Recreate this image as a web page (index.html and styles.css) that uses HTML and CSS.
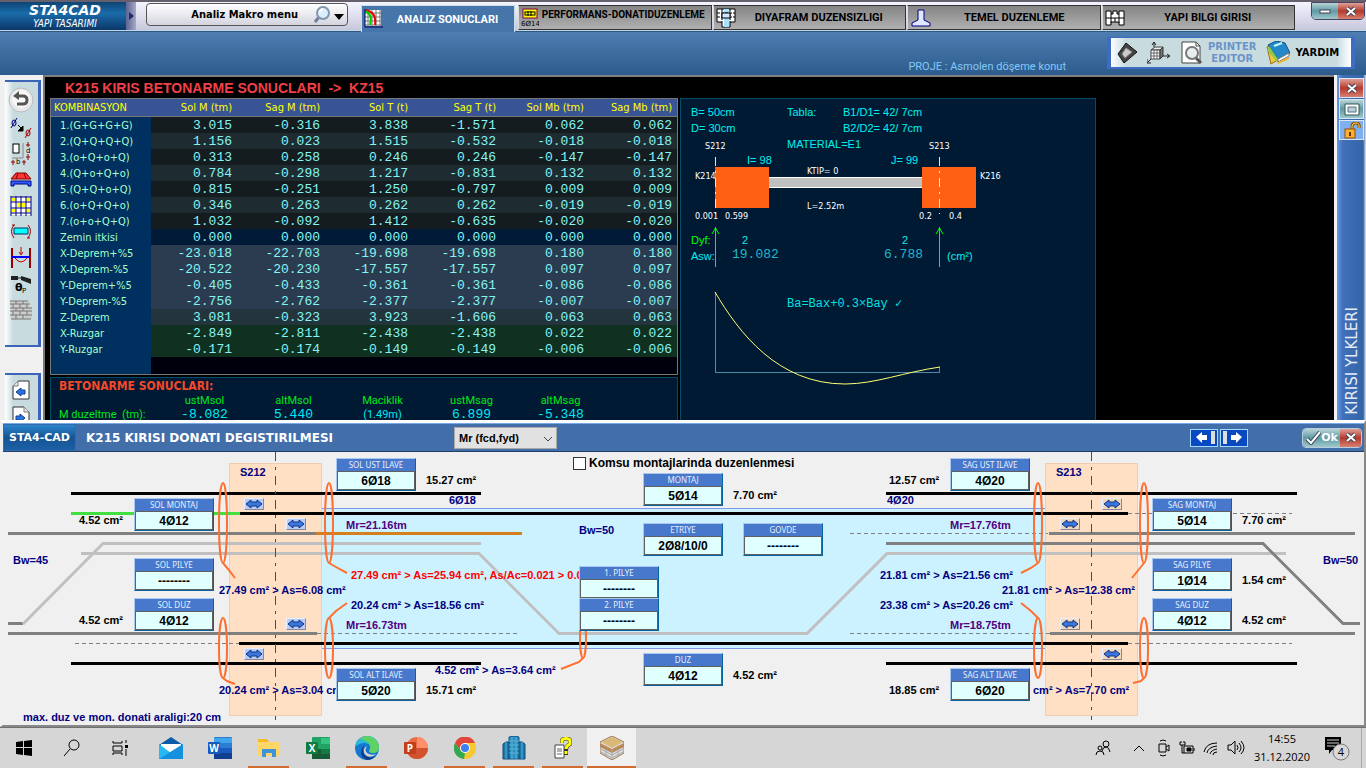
FILE: index.html
```html
<!DOCTYPE html>
<html lang="tr">
<head>
    <meta charset="UTF-8">
    <meta name="viewport" content="width=device-width, initial-scale=1.0">
    <title>STA4CAD - K215</title>
    <link rel="stylesheet" href="styles.css">
</head>
<body>

    <header class="topbar">
        <div class="logo"><b>STA4CAD</b><i>YAPI TASARIMI</i></div>
        <button class="logoArrow" aria-label="menu"><svg width="5" height="8"><path d="M0 0L5 4L0 8z" fill="#1c2c66"/></svg></button>
        <button class="macro">
            <span>Analiz Makro menu</span>
            <svg width="30" height="20" viewBox="0 0 30 20">
                <path d="M1 17L6 11" stroke="#6f7f95" stroke-width="3"/>
                <circle cx="9" cy="8" r="6" fill="#d8efff" stroke="#8296ad" stroke-width="2"/>
                <path d="M6 7a4 4 0 0 1 3-3" stroke="#fff" stroke-width="2" fill="none"/>
                <path d="M20 9h10l-5 6z" fill="#000"/>
            </svg>
        </button>
        <nav class="tabs">
            <button class="tab active">
                <svg width="20" height="20" viewBox="0 0 20 20"><path d="M1 1h16v16H1z" fill="#fff"/><path d="M1 4h16M1 8h16M1 12h16M1 16h16M4 1v16M8 1v16M12 1v16M16 1v16" stroke="#777"/><path d="M1 1Q13 3 11 16" stroke="#e00" stroke-width="2" fill="none"/><path d="M1 2Q9 5 6 16" stroke="#0c0" stroke-width="2" fill="none"/><path d="M1 0v18h18" stroke="#006" fill="none"/></svg>
                <span>ANALIZ SONUCLARI</span>
            </button>
            <button class="tab long">
                <svg width="18" height="19" viewBox="0 0 18 19"><rect x="2" y="1" width="14" height="9" fill="#ff0" stroke="#804"/><rect x="4" y="4" width="10" height="3" fill="#ff0" stroke="#000"/><path d="M7 3v5M10 3v5" stroke="#000"/><text x="0" y="18" class="tiny">6Ø14</text></svg>
                <span>PERFORMANS-DONATIDUZENLEME</span>
            </button>
            <button class="tab">
                <svg width="20" height="20" viewBox="0 0 20 20"><path d="M1 1h18v13h-5v5H6v-5H1z" fill="#fff" stroke="#000"/><path d="M8 1h5v18H8z" fill="#a8e0ff"/><path d="M1 5h18M1 9h18M6 1v13M14 1v13" stroke="#000" stroke-dasharray="3 1"/><rect x="6" y="5" width="8" height="5" fill="#d0e8ff" stroke="#000"/></svg>
                <span>DIYAFRAM DUZENSIZLIGI</span>
            </button>
            <button class="tab">
                <svg width="22" height="20" viewBox="0 0 22 20"><path d="M8 2h6v10l6 3v3H2v-3l6-3z" fill="#e0e8ff" stroke="#000080"/></svg>
                <span>TEMEL DUZENLEME</span>
            </button>
            <button class="tab">
                <svg width="20" height="18" viewBox="0 0 20 18"><path d="M1 2h5v3h2V2h4v3h2V2h5v14h-5v-3H6v3H1z" fill="#fff" stroke="#000"/><path d="M1 9h18M6 5v4M14 5v4M10 9v4M6 9v5M14 9v5" stroke="#000"/></svg>
                <span>YAPI BILGI GIRISI</span>
            </button>
        </nav>
        <div class="winBtns">
            <button class="teal" aria-label="Minimize"><svg width="12" height="5"><rect x="1" y="1" width="10" height="3" fill="#fff" stroke="#445"/></svg></button>
            <button class="red" aria-label="Close"><svg width="12" height="11" viewBox="0 0 12 11"><path d="M2 2l8 7M10 2l-8 7" stroke="#445" stroke-width="4"/><path d="M2 2l8 7M10 2l-8 7" stroke="#fff" stroke-width="2"/></svg></button>
        </div>
    </header>

    <div class="ribbon">
        <span class="project">PROJE : Asmolen döşeme konut</span>
        <div class="tools">
            <button aria-label="Plan"><svg width="20" height="20" viewBox="0 0 20 20"><path d="M9 0L20 9L7 20L1 11z" fill="#444" stroke="#111"/><path d="M9 5L15 9L8 15L5 11z" fill="#ccc" stroke="#888"/></svg></button>
            <button aria-label="3D"><svg width="24" height="22" viewBox="0 0 24 22"><path d="M4 8l4-3h8l-3 3z" fill="#eee" stroke="#444"/><path d="M4 8h9v9H4z" fill="#fff" stroke="#444"/><path d="M13 8l3-3v9l-3 3z" fill="#777" stroke="#333"/><path d="M4 11h9M4 14h9M7 8v9M10 8v9" stroke="#666"/><path d="M7 5V0M5 3l2-3l2 3M16 14h6M20 12l3 2l-3 2M4 17l-4 4M0 17v4h4" fill="none" stroke="#222"/></svg></button>
            <button class="printer">
                <svg width="22" height="23" viewBox="0 0 22 23"><path d="M1 1h14l4 4v17H1z" fill="#fff" stroke="#444"/><path d="M15 1v4h4" fill="none" stroke="#444"/><path d="M14 16l6 6" stroke="#555" stroke-width="3"/><circle cx="11" cy="12" r="6" fill="#e8eef0" stroke="#777" stroke-width="2"/></svg>
                <span>PRINTER<br>EDITOR</span>
            </button>
            <button class="help">
                <svg width="24" height="24" viewBox="0 0 24 24"><path d="M1 6l11-4l3 15l-10 6z" fill="#f4c63a" stroke="#9a7008"/><path d="M2 4l8-4l9 2l5 10l-12 6z" fill="#2688c8" stroke="#154c80"/><path d="M3 5l9 13v4L1 9z" fill="#8ccb4c"/><path d="M12 18l11-6v3l-11 6z" fill="#fff" stroke="#777"/><path d="M12 21l11-5v2l-11 5z" fill="#efb423"/><path d="M8 5l8-3" stroke="#bff" stroke-width="2"/></svg>
                <span>YARDIM</span>
            </button>
        </div>
    </div>

    <main>
        <aside class="side">
            <div class="toolbox">
                <button class="undo" aria-label="Undo"><svg width="26" height="26" viewBox="0 0 26 26"><circle cx="13" cy="13" r="12" fill="#e8e8e8" stroke="#bbb"/><circle cx="13" cy="12" r="9" fill="#f8f8f8"/><path d="M10 9h5q4 0 4 4t-4 4H9" fill="none" stroke="#555" stroke-width="3"/><path d="M11 4v9L5 9z" fill="#555"/></svg></button>
                <button aria-label="Donati"><svg width="22" height="22" viewBox="0 0 22 22"><ellipse cx="4" cy="6" rx="2" ry="3" fill="none" stroke="#000080"/><path d="M1 11L7 1" stroke="#000080"/><ellipse cx="18" cy="16" rx="2" ry="3" fill="none" stroke="#a00000"/><path d="M15 21l6-10" stroke="#a00000"/><path d="M8 8l5 5M13 9v5H8z" stroke="#000"/></svg></button>
                <button aria-label="Kesit"><svg width="22" height="24" viewBox="0 0 22 24"><rect x="3" y="2" width="6" height="9" fill="#fff" stroke="#000"/><path d="M13 1v15H2" stroke="#888" fill="none"/><path d="M18 0v5M16 3h4M18 12v6M16 15h4M1 20h4M3 18v5M12 20h4M14 18v5" stroke="#900"/><text x="16" y="11" class="tiny">d</text><text x="6" y="22" class="tiny">b</text></svg></button>
                <button aria-label="Tabla"><svg width="22" height="20" viewBox="0 0 22 20"><path d="M6 3h10l5 6H1z" fill="#f33" stroke="#800000"/><path d="M8 3L6 9M14 3l2 6" stroke="#800000"/><path d="M1 11h20v5h-3v-2H4v2H1z" fill="#3060ff" stroke="#000080"/></svg></button>
                <button aria-label="Tablo"><svg width="22" height="22" viewBox="0 0 22 22"><path d="M1 2h20v18H1z" fill="#fff"/><path d="M2 3h4v3H2zM16 3h4v3h-4zM7 8h8v4H7zM2 14h4v3H2zM16 14h4v3h-4z" fill="#ff0"/><path d="M1 2h20M1 7h20M1 13h20M1 18h20M1 1v20M6 1v20M11 1v20M16 1v20M21 1v20" stroke="#000080"/></svg></button>
                <button aria-label="Moment"><svg width="22" height="18" viewBox="0 0 22 18"><path d="M4 5h14v6H4z" fill="#0ff" stroke="#036"/><path d="M4 2Q-1 8 4 15M2 2h3M18 2q5 6 0 13M17 15h3" fill="none" stroke="#900" stroke-width="1"/></svg></button>
                <button aria-label="Kiris"><svg width="22" height="24" viewBox="0 0 22 24"><path d="M2 2v20M20 2v20" stroke="#900" stroke-width="2"/><path d="M2 11h18" stroke="#00f" stroke-width="2"/><path d="M5 12q6 8 12 0M11 1v7M9 6l2 3l2-3" fill="none" stroke="#c00"/></svg></button>
                <button aria-label="Mafsal"><svg width="22" height="22" viewBox="0 0 22 22"><path d="M1 3h7v4H1zM11 3l10 3v5l-10-4z" fill="#222"/><path d="M6 5h8" stroke="#222"/><text x="5" y="18" class="theta">θ</text><text x="12" y="20" class="tiny">P</text></svg></button>
                <button aria-label="Duvar"><svg width="22" height="20" viewBox="0 0 22 20"><path d="M0 1h19v6h3v12H1V6H0z" fill="#ccc"/><path d="M0 1h18M0 4h20M0 8h22M0 11h22M0 15h22M1 19h20M6 1v3M13 1v3M3 4v4M10 4v4M17 4v4M6 8v3M13 8v3M3 11v4M10 11v4M17 11v4M6 15v4M13 15v4" stroke="#777"/></svg></button>
            </div>
            <div class="toolbox pages">
                <button aria-label="Onceki"><svg width="18" height="20" viewBox="0 0 18 20"><path d="M6 1h11v18H1V6z" fill="#fff" stroke="#333"/><path d="M1 6h5V1" fill="#eee" stroke="#777"/><path d="M4 12l5-4v2h4v4H9v2z" fill="#2a74e0" stroke="#123f8c"/></svg></button>
                <button aria-label="Sonraki"><svg width="18" height="20" viewBox="0 0 18 20"><path d="M1 1h11l5 5v13H1z" fill="#fff" stroke="#333"/><path d="M12 1v5h5" fill="#eee" stroke="#777"/><path d="M13 12L8 8v2H4v4h4v2z" fill="#2a74e0" stroke="#123f8c"/></svg></button>
            </div>
        </aside>

        <section class="screen">
            <h1>K215 KIRIS BETONARME SONUCLARI &nbsp;-&gt;&nbsp; KZ15</h1>
            <div class="cols">
                <div class="left">
                    <table class="combo">
                        <thead>
                            <tr><th>KOMBINASYON</th><th>Sol M (tm)</th><th>Sag M (tm)</th><th>Sol T (t)</th><th>Sag T (t)</th><th>Sol Mb (tm)</th><th>Sag Mb (tm)</th></tr>
                        </thead>
                        <tbody>
                            <tr class="a"><th>1.(G+G+G+G)</th><td>3.015</td><td>-0.316</td><td>3.838</td><td>-1.571</td><td>0.062</td><td>0.062</td></tr>
                            <tr class="b"><th>2.(Q+Q+Q+Q)</th><td>1.156</td><td>0.023</td><td>1.515</td><td>-0.532</td><td>-0.018</td><td>-0.018</td></tr>
                            <tr class="a"><th>3.(o+Q+o+Q)</th><td>0.313</td><td>0.258</td><td>0.246</td><td>0.246</td><td>-0.147</td><td>-0.147</td></tr>
                            <tr class="b"><th>4.(Q+o+Q+o)</th><td>0.784</td><td>-0.298</td><td>1.217</td><td>-0.831</td><td>0.132</td><td>0.132</td></tr>
                            <tr class="a"><th>5.(Q+Q+o+Q)</th><td>0.815</td><td>-0.251</td><td>1.250</td><td>-0.797</td><td>0.009</td><td>0.009</td></tr>
                            <tr class="b"><th>6.(o+Q+Q+o)</th><td>0.346</td><td>0.263</td><td>0.262</td><td>0.262</td><td>-0.019</td><td>-0.019</td></tr>
                            <tr class="a"><th>7.(o+o+Q+Q)</th><td>1.032</td><td>-0.092</td><td>1.412</td><td>-0.635</td><td>-0.020</td><td>-0.020</td></tr>
                            <tr class="soil"><th>Zemin itkisi</th><td>0.000</td><td>0.000</td><td>0.000</td><td>0.000</td><td>0.000</td><td>0.000</td></tr>
                            <tr class="quake"><th>X-Deprem+%5</th><td>-23.018</td><td>-22.703</td><td>-19.698</td><td>-19.698</td><td>0.180</td><td>0.180</td></tr>
                            <tr class="quake"><th>X-Deprem-%5</th><td>-20.522</td><td>-20.230</td><td>-17.557</td><td>-17.557</td><td>0.097</td><td>0.097</td></tr>
                            <tr class="quake"><th>Y-Deprem+%5</th><td>-0.405</td><td>-0.433</td><td>-0.361</td><td>-0.361</td><td>-0.086</td><td>-0.086</td></tr>
                            <tr class="quake"><th>Y-Deprem-%5</th><td>-2.756</td><td>-2.762</td><td>-2.377</td><td>-2.377</td><td>-0.007</td><td>-0.007</td></tr>
                            <tr class="vert"><th>Z-Deprem</th><td>3.081</td><td>-0.323</td><td>3.923</td><td>-1.606</td><td>0.063</td><td>0.063</td></tr>
                            <tr class="wind"><th>X-Ruzgar</th><td>-2.849</td><td>-2.811</td><td>-2.438</td><td>-2.438</td><td>0.022</td><td>0.022</td></tr>
                            <tr class="wind"><th>Y-Ruzgar</th><td>-0.171</td><td>-0.174</td><td>-0.149</td><td>-0.149</td><td>-0.006</td><td>-0.006</td></tr>
                            <tr class="blank"><th></th><td colspan="6"></td></tr>
                        </tbody>
                    </table>
                    <div class="results">
                        <h2>BETONARME SONUCLARI:</h2>
                        <table>
                            <tr><th></th><th>ustMsol</th><th>altMsol</th><th>Maciklik</th><th>ustMsag</th><th>altMsag</th></tr>
                            <tr><th>M duzeltme &nbsp;(tm):</th><td>-8.082</td><td>5.440</td><td class="span">(1.49m)</td><td>6.899</td><td>-5.348</td></tr>
                        </table>
                    </div>
                </div>
                <div class="panel">
                    <svg class="beam" width="414" height="320" viewBox="681 99 414 320">
                        <g class="info">
                            <text x="691" y="116">B= 50cm</text>
                            <text x="691" y="132">D= 30cm</text>
                            <text x="787" y="116">Tabla:</text>
                            <text x="843" y="116">B1/D1= 42/ 7cm</text>
                            <text x="843" y="132">B2/D2= 42/ 7cm</text>
                            <text x="787" y="148">MATERIAL=E1</text>
                            <text x="747" y="164">I= 98</text>
                            <text x="891" y="164">J= 99</text>
                            <text x="691" y="244" class="lime">Dyf:</text>
                            <text x="742" y="244">2</text>
                            <text x="902" y="244">2</text>
                            <text x="691" y="260">Asw:</text>
                            <text x="947" y="260">(cm²)</text>
                        </g>
                        <rect x="769" y="177" width="153" height="11" fill="#c0c0c0"/>
                        <path d="M769 177.500h153M769 187.500h153" stroke="#fff"/>
                        <rect x="715" y="167" width="54" height="41" fill="#ff6014"/>
                        <rect x="922" y="167" width="54" height="41" fill="#ff6014"/>
                        <path d="M715.500 157v57M939.500 157v57" stroke="#ffff20" stroke-dasharray="9 5 2 5"/>
                        <g class="small">
                            <text x="705" y="149">S212</text>
                            <text x="929" y="149">S213</text>
                            <text x="695" y="179">K214</text>
                            <text x="980" y="179">K216</text>
                            <text x="807" y="174">KTIP= 0</text>
                            <text x="807" y="209">L=2.52m</text>
                            <text x="695" y="219">0.001</text>
                            <text x="725" y="219">0.599</text>
                            <text x="919" y="219">0.2</text>
                            <text x="949" y="219">0.4</text>
                        </g>
                        <path d="M715.500 267v-40M712 234l3.500-6l3.500 6M939.500 267v-40M936 234l3.500-6l3.500 6" stroke="#0f0" fill="none"/>
                        <g class="mono">
                            <text x="732" y="258">19.082</text>
                            <text x="884" y="258">6.788</text>
                            <text x="787" y="307" class="combi">Ba=Bax+0.3×Bay ✓</text>
                        </g>
                        <path d="M715.500 292v80M939.500 367v5" stroke="#808080"/>
                        <path d="M715 372.500h225" stroke="#4a8aa6"/>
                        <path d="M715 292C739 333 778 384 845 384C875 384 905 372 940 367" stroke="#ffff70" fill="none"/>
                    </svg>
                </div>
            </div>
        </section>

        <aside class="rail">
            <button class="red" aria-label="Kapat"><svg width="12" height="11" viewBox="0 0 12 11"><path d="M2 2l8 7M10 2l-8 7" stroke="#445" stroke-width="4"/><path d="M2 2l8 7M10 2l-8 7" stroke="#fff" stroke-width="2"/></svg></button>
            <button class="teal" aria-label="Pencere"><svg width="16" height="13" viewBox="0 0 16 13"><path d="M1 1h14v11H1z" fill="#fff" stroke="#355"/><path d="M4 4h8v5H4z" fill="#bcd" stroke="#577"/></svg></button>
            <button class="lock" aria-label="Kilit"><svg width="18" height="17" viewBox="0 0 18 17"><path d="M9 8V4q0-3 4-3t3 5" fill="none" stroke="#8a5200" stroke-width="3"/><path d="M9 8V4q0-3 4-3t3 5" fill="none" stroke="#ffd060" stroke-width="1"/><rect x="2" y="7" width="10" height="9" fill="#ffb030" stroke="#8a5200"/><path d="M7 10v4" stroke="#630" stroke-width="2"/></svg></button>
            <span>KIRISI YLKLERI</span>
        </aside>
    </main>

    <section class="dialog">
        <div class="titlebar">
            <b class="brand">STA4-CAD</b>
            <h2>K215 KIRISI DONATI DEGISTIRILMESI</h2>
            <div class="pick">
                <select aria-label="Mr"><option>Mr (fcd,fyd)</option></select>
                <svg width="10" height="6" viewBox="0 0 10 6"><path d="M1 1l4 4l4-4" fill="none" stroke="#444"/></svg>
            </div>
            <div class="nav">
                <button aria-label="Geri"><svg width="22" height="13" viewBox="0 0 22 13"><path d="M3 6l6-5v3h5v5H9v3z" fill="#fff"/><path d="M18 0h4v13h-4z" fill="#ddd"/></svg></button>
                <button aria-label="Ileri"><svg width="22" height="13" viewBox="0 0 22 13"><path d="M19 6l-6-5v3H8v5h5v3z" fill="#fff"/><path d="M0 0h4v13H0z" fill="#ddd"/></svg></button>
            </div>
            <div class="okBtns">
                <button class="teal"><svg width="16" height="14" viewBox="0 0 16 14"><path d="M2 8l4 4l9-11" fill="none" stroke="#345" stroke-width="4"/><path d="M2 8l4 4l9-11" fill="none" stroke="#fff" stroke-width="2"/></svg>Ok</button>
                <button class="red" aria-label="Kapat"><svg width="12" height="11" viewBox="0 0 12 11"><path d="M2 2l8 7M10 2l-8 7" stroke="#445" stroke-width="4"/><path d="M2 2l8 7M10 2l-8 7" stroke="#fff" stroke-width="2"/></svg></button>
            </div>
        </div>
        <div class="board">
            <svg width="1361" height="273" viewBox="3 452 1361 273">
                <rect x="322" y="508" width="723" height="141" fill="#ccf2ff"/>
                <path d="M322 508.500h723M322 648.500h723" stroke="#7f98e8"/>
                <rect x="229.500" y="463.500" width="92" height="252" fill="#ffe0c4" stroke="#f0ceaa"/>
                <rect x="1045.500" y="463.500" width="92" height="252" fill="#ffe0c4" stroke="#f0ceaa"/>

                <!-- montaj ve duz donatilar -->
                <g fill="none" stroke-width="3">
                    <path d="M71 493.500h410M886 493.500h411M71 663.500h410M886 663.500h411M240 513.500h888M239 643.500h889" stroke="#000"/>
                    <path d="M71 513.500h169" stroke="#40e040"/>
                    <path d="M8 533.500h308M1049 533.500h306M8 633.500h309M1050 633.500h305M8 623.500h15" stroke="#808080"/>
                    <path d="M316 533.500h206" stroke="#d48020"/>
                    <path d="M23 624L103 543.500H481M81 553.500H479L559 633.500H807L887 553.500H1286" stroke="#c0c0c0"/>
                    <path d="M886 543.500H1263L1343 623.500H1360" stroke="#808080"/>
                </g>
                <path d="M1128 513.500h164M1128 643.500h164M75 643.500h164M317 633.500h200M850 533.500h198M850 633.500h200" stroke="#808080" stroke-dasharray="4 3"/>
                <path d="M275.500 452v268M1091.500 452v268" stroke="#f00" stroke-dasharray="9 6 3 6"/>

                <g class="mark">
                    <ellipse cx="223" cy="523" rx="4" ry="40"/>
                    <ellipse cx="329" cy="523" rx="4" ry="40"/>
                    <ellipse cx="1038" cy="523" rx="4" ry="40"/>
                    <ellipse cx="1144" cy="523" rx="4" ry="40"/>
                    <ellipse cx="223" cy="648" rx="4" ry="30"/>
                    <ellipse cx="329" cy="648" rx="4" ry="30"/>
                    <ellipse cx="1038" cy="648" rx="4" ry="30"/>
                    <ellipse cx="1144" cy="648" rx="4" ry="30"/>
                    <ellipse cx="583" cy="638" rx="3" ry="20"/>
                    <path d="M223 563l5 6l7 9M329 563l7 4l11 6M1038 563l-7 5l-10 5M1144 563l-12 15M223 678l4 3l8 3M329 618l7-7l11-8M1038 618l-7-7l-10-8M1144 678l-3 3l-8 2M583 658l-4 4l-18 7"/>
                </g>

                <g class="navy">
                    <text x="240" y="476">S212</text>
                    <text x="1056" y="476">S213</text>
                    <text x="13" y="564">Bw=45</text>
                    <text x="579" y="534">Bw=50</text>
                    <text x="1323" y="564">Bw=50</text>
                    <text x="449" y="504">6Ø18</text>
                    <text x="887" y="504">4Ø20</text>
                    <text x="219" y="594">27.49 cm² &gt; As=6.08 cm²</text>
                    <text x="219" y="694">20.24 cm² &gt; As=3.04 cm²</text>
                    <text x="351" y="579" class="warn">27.49 cm² &gt; As=25.94 cm², As/Ac=0.021 &gt; 0.02</text>
                    <text x="351" y="609">20.24 cm² &gt; As=18.56 cm²</text>
                    <text x="435" y="674">4.52 cm² &gt; As=3.64 cm²</text>
                    <text x="880" y="579">21.81 cm² &gt; As=21.56 cm²</text>
                    <text x="880" y="609">23.38 cm² &gt; As=20.26 cm²</text>
                    <text x="1002" y="594">21.81 cm² &gt; As=12.38 cm²</text>
                    <text x="1033" y="694">cm² &gt; As=7.70 cm²</text>
                    <text x="23" y="721">max. duz ve mon. donati araligi:20 cm</text>
                </g>
                <g class="mr">
                    <text x="346" y="529">Mr=21.16tm</text>
                    <text x="346" y="629">Mr=16.73tm</text>
                    <text x="950" y="529">Mr=17.76tm</text>
                    <text x="950" y="629">Mr=18.75tm</text>
                </g>
                <g class="area">
                    <text x="79" y="524">4.52 cm²</text>
                    <text x="79" y="624">4.52 cm²</text>
                    <text x="426" y="484">15.27 cm²</text>
                    <text x="426" y="694">15.71 cm²</text>
                    <text x="733" y="499">7.70 cm²</text>
                    <text x="733" y="679">4.52 cm²</text>
                    <text x="889" y="484">12.57 cm²</text>
                    <text x="889" y="694">18.85 cm²</text>
                    <text x="1242" y="524">7.70 cm²</text>
                    <text x="1242" y="584">1.54 cm²</text>
                    <text x="1242" y="624">4.52 cm²</text>
                </g>
                <defs>
                    <path id="dbl" d="M1 5l5-4v2h6V1l5 4l-5 4V7H6v2z" fill="#3a78e0" stroke="#12337c"/>
                </defs>
            </svg>

            <label class="check"><input type="checkbox">Komsu montajlarinda duzenlenmesi</label>

            <label class="bar solUst">SOL UST ILAVE<input value="6Ø18"></label>
            <label class="bar solMontaj">SOL MONTAJ<input value="4Ø12"></label>
            <label class="bar solPilye">SOL PILYE<input value="--------"></label>
            <label class="bar solDuz">SOL DUZ<input value="4Ø12"></label>
            <label class="bar solAlt">SOL ALT ILAVE<input value="5Ø20"></label>
            <label class="bar montaj">MONTAJ<input value="5Ø14"></label>
            <label class="bar etriye">ETRIYE<input value="2Ø8/10/0"></label>
            <label class="bar govde">GOVDE<input value="--------"></label>
            <label class="bar pilye1">1. PILYE<input value="--------"></label>
            <label class="bar pilye2">2. PILYE<input value="--------"></label>
            <label class="bar duz">DUZ<input value="4Ø12"></label>
            <label class="bar sagUst">SAG UST ILAVE<input value="4Ø20"></label>
            <label class="bar sagMontaj">SAG MONTAJ<input value="5Ø14"></label>
            <label class="bar sagPilye">SAG PILYE<input value="1Ø14"></label>
            <label class="bar sagDuz">SAG DUZ<input value="4Ø12"></label>
            <label class="bar sagAlt">SAG ALT ILAVE<input value="6Ø20"></label>

            <button class="slide s1" aria-label="Kaydir"><svg width="18" height="10"><use href="#dbl"/></svg></button>
            <button class="slide s2" aria-label="Kaydir"><svg width="18" height="10"><use href="#dbl"/></svg></button>
            <button class="slide s3" aria-label="Kaydir"><svg width="18" height="10"><use href="#dbl"/></svg></button>
            <button class="slide s4" aria-label="Kaydir"><svg width="18" height="10"><use href="#dbl"/></svg></button>
            <button class="slide tan s5" aria-label="Kaydir"><svg width="18" height="10"><use href="#dbl"/></svg></button>
            <button class="slide tan s6" aria-label="Kaydir"><svg width="18" height="10"><use href="#dbl"/></svg></button>
            <button class="slide tan s7" aria-label="Kaydir"><svg width="18" height="10"><use href="#dbl"/></svg></button>
            <button class="slide tan s8" aria-label="Kaydir"><svg width="18" height="10"><use href="#dbl"/></svg></button>
        </div>
    </section>

    <footer class="taskbar">
        <div class="apps">
            <button aria-label="Start"><svg width="16" height="16" viewBox="0 0 16 16"><path d="M0 2l7-1v6H0zM8 1l8-1v7H8zM0 8h7v7l-7-1zM8 8h8v8l-8-1z" fill="#000"/></svg></button>
            <button aria-label="Search"><svg width="18" height="18" viewBox="0 0 18 18"><circle cx="11" cy="6" r="5" fill="none" stroke="#000"/><path d="M7 10l-6 7" stroke="#000"/></svg></button>
            <button class="view" aria-label="Task view"><svg width="18" height="18" viewBox="0 0 18 18"><path d="M2 2v2h9V2M2 16v-2h9v2M2 7h9v5H2zM15 1v3M15 10v7" fill="none" stroke="#000"/><path d="M14 6h3v3h-3z" fill="#000"/></svg></button>
            <button class="app" aria-label="Mail"><svg width="26" height="24" viewBox="0 0 26 24"><path d="M1 9L13 1l12 8v14H1z" fill="#0b5ca8"/><path d="M3 8h20v8H3z" fill="#fff"/><path d="M1 8l12 9l12-9v15H1z" fill="#28b8f4"/><path d="M1 23l24-15v15z" fill="#1490df"/></svg></button>
            <button class="app" aria-label="Word"><svg width="24" height="22" viewBox="0 0 24 22"><rect x="6" y="0" width="18" height="22" rx="1" fill="#2b7cd3"/><path d="M6 1h18v5H6z" fill="#41a5ee"/><path d="M6 16h18v6H6z" fill="#103f91"/><path d="M6 11h18v5H6z" fill="#185abd"/><rect x="0" y="5" width="12" height="12" rx="1" fill="#185abd"/><text x="6" y="15" class="glyph">W</text></svg></button>
            <button class="app open" aria-label="Explorer"><svg width="22" height="20" viewBox="0 0 22 20"><path d="M0 1h9l2 3h11v14H0z" fill="#f5b92a"/><path d="M0 4h22v14H0z" fill="#ffd766"/><path d="M4 19v-8h14v8h-4v-4H8v4z" fill="#3f93d8"/></svg></button>
            <button class="app" aria-label="Excel"><svg width="24" height="22" viewBox="0 0 24 22"><rect x="6" y="0" width="18" height="22" rx="1" fill="#21a366"/><path d="M15 1h9v6h-9z" fill="#33c481"/><path d="M6 12h18v10H6z" fill="#185c37"/><path d="M15 12h9v5h-9z" fill="#107c41"/><rect x="0" y="5" width="12" height="12" rx="1" fill="#107c41"/><text x="6" y="15" class="glyph">X</text></svg></button>
            <button class="app open" aria-label="Edge"><svg width="24" height="24" viewBox="0 0 24 24"><circle cx="12" cy="12" r="12" fill="#1478d0"/><path d="M0 11A12 12 0 0 1 12 0q8 0 11 7q2 6-2 9q-3 2-6 0q-2-1 0-3q1-5-5-6Q4 7 0 11z" fill="#2bb8d8"/><path d="M12 0a12 12 0 0 1 12 11q0 6-6 6q-5 0-3-4q2-7-10-10q3-3 7-3z" fill="#5fd264"/><path d="M9 10q-3 8 4 11q4 1 8-1q-4 4-9 4Q6 22 6 16q0-4 3-6z" fill="#12418a"/><path d="M12 10q-3 4 0 7q4 3 9 1q-4 4-9 2q-4-2-3-7q1-2 3-3z" fill="#d6d6d6"/></svg></button>
            <button class="app" aria-label="PowerPoint"><svg width="24" height="22" viewBox="0 0 24 22"><circle cx="13" cy="11" r="11" fill="#ed6c47"/><path d="M13 0a11 11 0 0 1 11 11H13z" fill="#ff8f6b"/><path d="M2 11h22a11 11 0 0 1-22 0z" fill="#d35230"/><rect x="0" y="5" width="12" height="12" rx="1" fill="#c43e1c"/><text x="6" y="15" class="glyph">P</text></svg></button>
            <button class="app open" aria-label="Chrome"><svg width="22" height="22" viewBox="0 0 22 22"><circle cx="11" cy="11" r="11" fill="#f6c92c"/><path d="M1 6A11 11 0 0 1 21 6H11L7 14z" fill="#e2463a"/><path d="M1 6l6 8l4 2l-1 6A11 11 0 0 1 1 6z" fill="#33a852"/><circle cx="11" cy="11" r="5" fill="#fff"/><circle cx="11" cy="11" r="4" fill="#3c7ff0"/></svg></button>
            <button class="app open" aria-label="Bina"><svg width="24" height="24" viewBox="0 0 24 24"><path d="M7 1q5-2 10 0v22H7z" fill="#2a90c0" stroke="#0f5c8c"/><path d="M1 8q3-3 6-2v17H1zM23 8q-3-3-6-2v17h6z" fill="#1878a8" stroke="#0f4c7c"/><path d="M10 1v22M14 1v22M7 5h10M7 9h10M7 13h10M7 17h10M4 6v17M20 6v17" stroke="#5cb0d8"/></svg></button>
            <button class="app open" aria-label="Yardim"><svg width="20" height="22" viewBox="0 0 20 22"><path d="M2 8h9v13H2z" fill="#fff" stroke="#444"/><path d="M4 12h5M4 14h5M4 17h5" stroke="#666"/><path d="M9 6V3q4-3 8 0v4q-4 2-4 6M13 13v5" fill="none" stroke="#333" stroke-width="4"/><path d="M9 6V3q4-3 8 0v4q-4 2-4 5M13 14v3" fill="none" stroke="#ff0" stroke-width="3"/></svg></button>
            <button class="app open current" aria-label="STA4CAD"><svg width="24" height="24" viewBox="0 0 24 24"><path d="M12 0l12 6v11l-12 7L0 17V6z" fill="#ddd" stroke="#9b7a50"/><path d="M12 1l11 5l-11 6L1 6z" fill="#dcb878"/><path d="M0 7l12 6v4L0 11zM24 7l-12 6v4l12-6z" fill="#b88a58"/><path d="M1 13l11 6l11-6M1 16l11 6l11-6M12 13v10M6 13v7M18 13v7" fill="none" stroke="#aaa"/></svg></button>
        </div>
        <div class="tray">
            <svg width="16" height="18" viewBox="0 0 16 18"><circle cx="11" cy="5" r="3"/><path d="M7 12q1-4 4-4t4 5"/><circle cx="5" cy="9" r="2"/><path d="M1 16q0-4 4-4t4 4"/></svg>
            <svg class="up" width="12" height="8" viewBox="0 0 12 8"><path d="M1 7l5-5l5 5"/></svg>
            <svg width="14" height="18" viewBox="0 0 14 18"><path d="M2 5h7v8H2zM9 8l3-2v6l-3-2M3 2q3-2 6 0M3 16q3 2 6 0"/></svg>
            <svg width="16" height="14" viewBox="0 0 16 14"><path d="M5 5h9v7H5zM15 7v3M1 1v3h5V1M2 0v2M5 0v2M3 4v8h2"/><path d="M8 7h4v3H8z" fill="#000"/></svg>
            <svg width="16" height="16" viewBox="0 0 16 16"><path d="M1 12Q3 3 14 3M4 13q1-6 10-7M7 14q1-4 7-5M10 15q0-3 4-3"/></svg>
            <svg width="18" height="16" viewBox="0 0 18 16"><path d="M1 5h3l4-4v13l-4-4H1zM10 5q2 3 0 5M12 3q4 5 0 9M14 1q6 7 0 13"/></svg>
            <time>14:55<br>31.12.2020</time>
            <button class="notes" aria-label="Notifications"><svg width="26" height="26" viewBox="0 0 26 26"><path d="M1 2h16v13H8l-3 4v-4H1z" fill="#000"/><path d="M3 5h12M3 8h12M3 11h8" stroke="#ccc"/><circle cx="17" cy="17" r="8" fill="#d8d8d8" stroke="#777"/><text x="17" y="21" class="count">4</text></svg></button>
        </div>
    </footer>

</body>
</html>
```
FILE: styles.css
```css
*{padding: 0; margin: 0; box-sizing: border-box;}
body{display: flex; flex-direction: column; height: 100vh; overflow: hidden; background: #f0f0f0; font-family: "Liberation Sans", Arial, sans-serif; font-size: 11px;}
button{border: none; background: none; font: inherit; display: flex; align-items: center; justify-content: center;}
svg{display: block; flex: none;}
.tiny{font: 7px "DejaVu Sans", sans-serif;}
.theta{font: bold 11px "DejaVu Sans", sans-serif;}

/* ust bar */
.topbar{display: flex; flex: none; height: 30px; border-top: 2px solid #66606c; background: linear-gradient(#f4f4ff, #c8c8dc);}
.logo{width: 126px; height: 28px; padding-left: 4px; background: linear-gradient(#0f4474, #1a6cab 40%, #0c3768); color: #fff; display: flex; flex-direction: column; align-items: center;}
.logo b{font: italic bold 14px/16px "DejaVu Sans", sans-serif;}
.logo i{font: italic 10px/12px "DejaVu Sans Condensed", "DejaVu Sans", sans-serif;}
.logoArrow{width: 10px; background: linear-gradient(90deg, #5c6490, #a8a8c8);}
.macro{width: 202px; height: 23px; margin: 1px 13px 0 10px; border: 1px solid #555; border-radius: 4px; background: linear-gradient(#fff, #d4d4e0); font: bold 11px "DejaVu Sans Condensed", "DejaVu Sans", sans-serif; justify-content: flex-end; gap: 16px; padding-right: 3px;}
.tabs{display: flex; flex: 1; padding-top: 3px; gap: 1px;}
.tab{flex: 1; gap: 2px; padding: 0 5px 0 2px; border: 1px solid #333; border-left-color: #ddd; background: linear-gradient(#858585, #b0b0b0); font: bold 11px Roboto, sans-serif; white-space: nowrap;}
.tab span{flex: 1; text-align: center;}
.tab.active{flex: none; width: 154px; margin-bottom: -2px; background: #4675a9; color: #fff; border: 1px solid #cde; border-bottom: none; position: relative; margin-right: 2px;}
.tab.long{font-size: 10px;}
.tab.long span{padding-bottom: 7px;}
.winBtns{display: flex; width: 54px; height: 18px; margin: 0 1px 0 16px; border: 1px solid #446; border-radius: 0 0 5px 5px; overflow: hidden;}
.winBtns button{flex: 1;}
.teal{background: linear-gradient(#b8d4d8, #5f9aa4 50%, #a0c8cc);}
.red{background: linear-gradient(#e0a098, #b43a2c 50%, #d88070);}

.ribbon{display: flex; flex: none; height: 45px; justify-content: flex-end; border-top: 1px solid #bcd8ee; box-shadow: inset 0 1px #33587e; background: linear-gradient(#4f7fb2, #2c5c8c);}
.project{font: 11px/14px Roboto, sans-serif; color: #84c8f8; margin: 29px 41px 0 0;}
.tools{display: flex; align-items: center; width: 248px; height: 32px; margin: 6px 11px 0 0; padding-left: 6px; gap: 10px; border: 2px solid #3c6cc4; border-width: 1px 4px 2px; background: linear-gradient(90deg, #fff, #c8dce0 6%, #c8dce0 94%, #fff);}
.tools button{gap: 5px; font: bold 10px/12px "DejaVu Sans", sans-serif;}
.printer span{color: #6c94c8;}

main{display: flex; flex: 1; min-height: 0; overflow: hidden;}
.side{flex: none; width: 45px; padding: 5px 0 0 5px; border-right: 2px solid #777;}
.toolbox{display: flex; flex-direction: column; align-items: center; width: 36px; padding: 5px 2px 24px 0; gap: 4px; border: 2px solid #3c64b8; border-width: 2px 3px 2px 0; background: linear-gradient(90deg, #fff, #c8dce0 25%);}
.toolbox button{height: 22px;}
.toolbox .undo{height: 26px;}
.pages{margin-top: 26px; padding: 4px 2px 4px 0;}

/* sonuc ekrani */
.screen{flex: 1; min-width: 0; padding-left: 5px; border-top: 2px solid #808080; background: #000; overflow: hidden;}
h1{height: 21px; padding-left: 15px; font-size: 14px; line-height: 22px; color: #f04048; white-space: nowrap;}
.cols{display: flex; gap: 2px;}
.left{flex: 0 1 628px;}
table{border-collapse: collapse; table-layout: fixed; width: 100%;}
.combo{border-collapse: separate; border-spacing: 0; border: 1px solid #777; background: #00000c; font-family: "DejaVu Sans Condensed", "DejaVu Sans", sans-serif;}
.combo th{text-align: left; font-weight: normal;}
.combo thead th{height: 18px; background: #385494; color: #ff0; border-bottom: 1px solid #777; text-align: right; padding-right: 5px;}
.combo thead th:first-child{width: 100px; text-align: left; padding: 0 0 0 3px;}
.combo thead th:nth-child(2){width: 86px;}
.combo tbody th{background: #003060; color: #a8ffc8; padding-left: 9px; white-space: nowrap;}
.combo td{height: 16px; text-align: right; padding: 2px 5px 0 0; color: #84f4f4; font: 13px/14px "Liberation Mono", monospace;}
.a{background: #141c20;}
.b{background: #1e2c32;}
.soil{background: #001a38;}
.quake{background: #2c3c50;}
.vert{background: #24343c;}
.wind{background: #103020;}
.combo .blank td{height: 17px;}
.results{height: 200px; margin-top: 2px; padding-left: 8px; border: 1px solid #004c68; background: #001a34;}
.results h2{font: bold 12px/16px "DejaVu Sans Condensed", "DejaVu Sans", sans-serif; color: #f44828;}
.results table{width: 546px;}
.results th, .results td{width: 89px; height: 14px; font: 11px/14px Roboto, sans-serif; color: #00e818; text-align: center; white-space: nowrap;}
.results th:first-child{width: 101px; text-align: left;}
.results td{color: #00e8f0; font: 13px/14px "Liberation Mono", monospace;}
.results .span{font: 11px/14px Roboto, sans-serif;}
.panel{flex: 0 0 416px; height: 400px; border: 1px solid #004c68; background: #001a34;}
.info{font-size: 11px; fill: #00f0f0;}
.info .lime{fill: #0f0;}
.small{font: 9px "DejaVu Sans Condensed", "DejaVu Sans", sans-serif; fill: #fff;}
.mono{font: 13px "Liberation Mono", monospace; fill: #20b8c8;}
.mono .combi{font-size: 12px; fill: #00e0e0;}

.rail{flex: none; display: flex; flex-direction: column; align-items: center; gap: 1px; width: 32px; padding: 3px 2px 0; border-left: 3px solid #f4f4f4; background: linear-gradient(90deg, #6898e4, #4070b8 20%, #3464a8 90%, #e8e8e8);}
.rail button{width: 25px; height: 20px; border: 1px solid #d8e8f8;}
.rail .lock{background: #80b0f0;}
.rail span{writing-mode: vertical-rl; transform: rotate(180deg); margin: auto 0 5px; font: 15px "DejaVu Sans", sans-serif; color: #e4ecf8; white-space: nowrap;}

/* donati penceresi */
.dialog{flex: none; border: 3px solid #f0f0f0; border-width: 3px 2px 2px 3px; border-top-color: #fff; border-right-color: #888; border-bottom-color: #888;}
.titlebar{display: flex; align-items: center; height: 29px; padding-right: 2px; border-top: 1px solid #78a8e8; border-bottom: 1px solid #203c68; background: #426eaa; color: #fff;}
.brand{width: 73px; height: 27px; border: 1px solid #346cac; background: linear-gradient(#2c84cc, #145494 50%, #1c60a4); font: bold 11px/25px "DejaVu Sans", sans-serif; text-align: center;}
.titlebar h2{width: 368px; padding-left: 10px; font: bold 12px "DejaVu Sans", sans-serif; white-space: nowrap; margin-right: 10px;}
.pick{position: relative;}
.pick svg{position: absolute; right: 4px; top: 9px; pointer-events: none;}
select{appearance: none; display: block; width: 103px; height: 22px; padding-left: 4px; border: 1px solid #aaa; background: #e1e1e1; color: #000; font: bold 11px "Liberation Sans", sans-serif;}
.nav{display: flex; gap: 2px; margin-left: auto; margin-right: 54px;}
.nav button{width: 28px; height: 18px; border: 1px solid #a0d8ff; background: #0848c0;}
.okBtns{display: flex; width: 60px; height: 20px; border: 1px solid #bcd; border-radius: 4px; overflow: hidden;}
.okBtns .teal{width: 37px; font: bold 11px "DejaVu Sans", sans-serif; color: #fff;}
.okBtns .red{flex: 1;}

.board{position: relative; height: 273px; background: #f0f0f0; overflow: hidden;}
.navy, .mr, .area{font-weight: bold; font-size: 11px; fill: #000080;}
.mr{fill: #500080;}
.area{fill: #000;}
.warn{fill: #f00;}
.mark{fill: none; stroke: #ff7030; stroke-width: 2;}
.check{position: absolute; left: 570px; top: 4px; display: flex; align-items: center; gap: 3px; font-size: 12px; font-weight: bold; line-height: 14px; white-space: nowrap;}
.check input{appearance: none; width: 13px; height: 13px; border: 1px solid #333; background: #fff;}
.bar{position: absolute; width: 80px; height: 33px; border: 1px solid #a8c8f0; border-right: 1px solid #0864a0; border-bottom: 1px solid #0864a0; background: #4878cc; color: #e4f0ff; font: 8px/12px "Noto Sans", sans-serif; text-align: center;}
.bar input{display: block; width: 100%; height: 19px; border: 1px solid #606060; background: #e0ffff; text-align: center; font: bold 12px "Liberation Sans", sans-serif; color: #000;}
.solUst{left: 333px; top: 6px;}
.solMontaj{left: 131px; top: 46px;}
.solPilye{left: 131px; top: 106px;}
.solDuz{left: 131px; top: 146px;}
.solAlt{left: 333px; top: 216px;}
.montaj{left: 640px; top: 21px;}
.etriye{left: 640px; top: 71px;}
.govde{left: 740px; top: 71px;}
.pilye1{left: 576px; top: 114px;}
.pilye2{left: 576px; top: 146px;}
.duz{left: 640px; top: 201px;}
.sagUst{left: 947px; top: 6px;}
.sagMontaj{left: 1149px; top: 46px;}
.sagPilye{left: 1149px; top: 106px;}
.sagDuz{left: 1149px; top: 146px;}
.sagAlt{left: 947px; top: 216px;}
.slide{position: absolute; width: 20px; height: 12px; background: #b8ccf8; border: 1px solid #e8f0ff; border-right-color: #889; border-bottom-color: #889;}
.slide.tan{background: #f0d8bc;}
.s1{left: 241px; top: 46px;}
.s2{left: 283px; top: 66px;}
.s3{left: 283px; top: 166px;}
.s4{left: 241px; top: 196px;}
.s5{left: 1099px; top: 46px;}
.s6{left: 1057px; top: 66px;}
.s7{left: 1057px; top: 166px;}
.s8{left: 1099px; top: 196px;}

/* gorev cubugu */
.taskbar{display: flex; flex: none; justify-content: space-between; height: 41px; border-top: 1px solid #707070; background: #d6d6d6;}
.apps{display: flex;}
.apps button{width: 48px; position: relative;}
.apps .view{margin-right: 2px;}
.apps .app{width: 49px;}
.open::after{content: ""; position: absolute; left: 4px; right: 4px; bottom: 0; height: 2px; background: #d06c30;}
.apps .current{background: #f0f0f0;}
.current::after{left: 0; right: 0;}
.glyph{font: bold 10px "Open Sans", sans-serif; fill: #fff; text-anchor: middle;}
.tray{display: flex; align-items: center; gap: 8px; margin-right: 4px; border-right: 1px solid #a8a8a8;}
.tray > svg{fill: none; stroke: #000;}
.tray .up{margin: 0 4px 0 14px;}
time{width: 58px; font: 11px/18px "Open Sans", sans-serif; text-align: center;}
.notes{width: 42px; padding-right: 6px;}
.count{font: 11px "Open Sans", sans-serif; text-anchor: middle;}
```
